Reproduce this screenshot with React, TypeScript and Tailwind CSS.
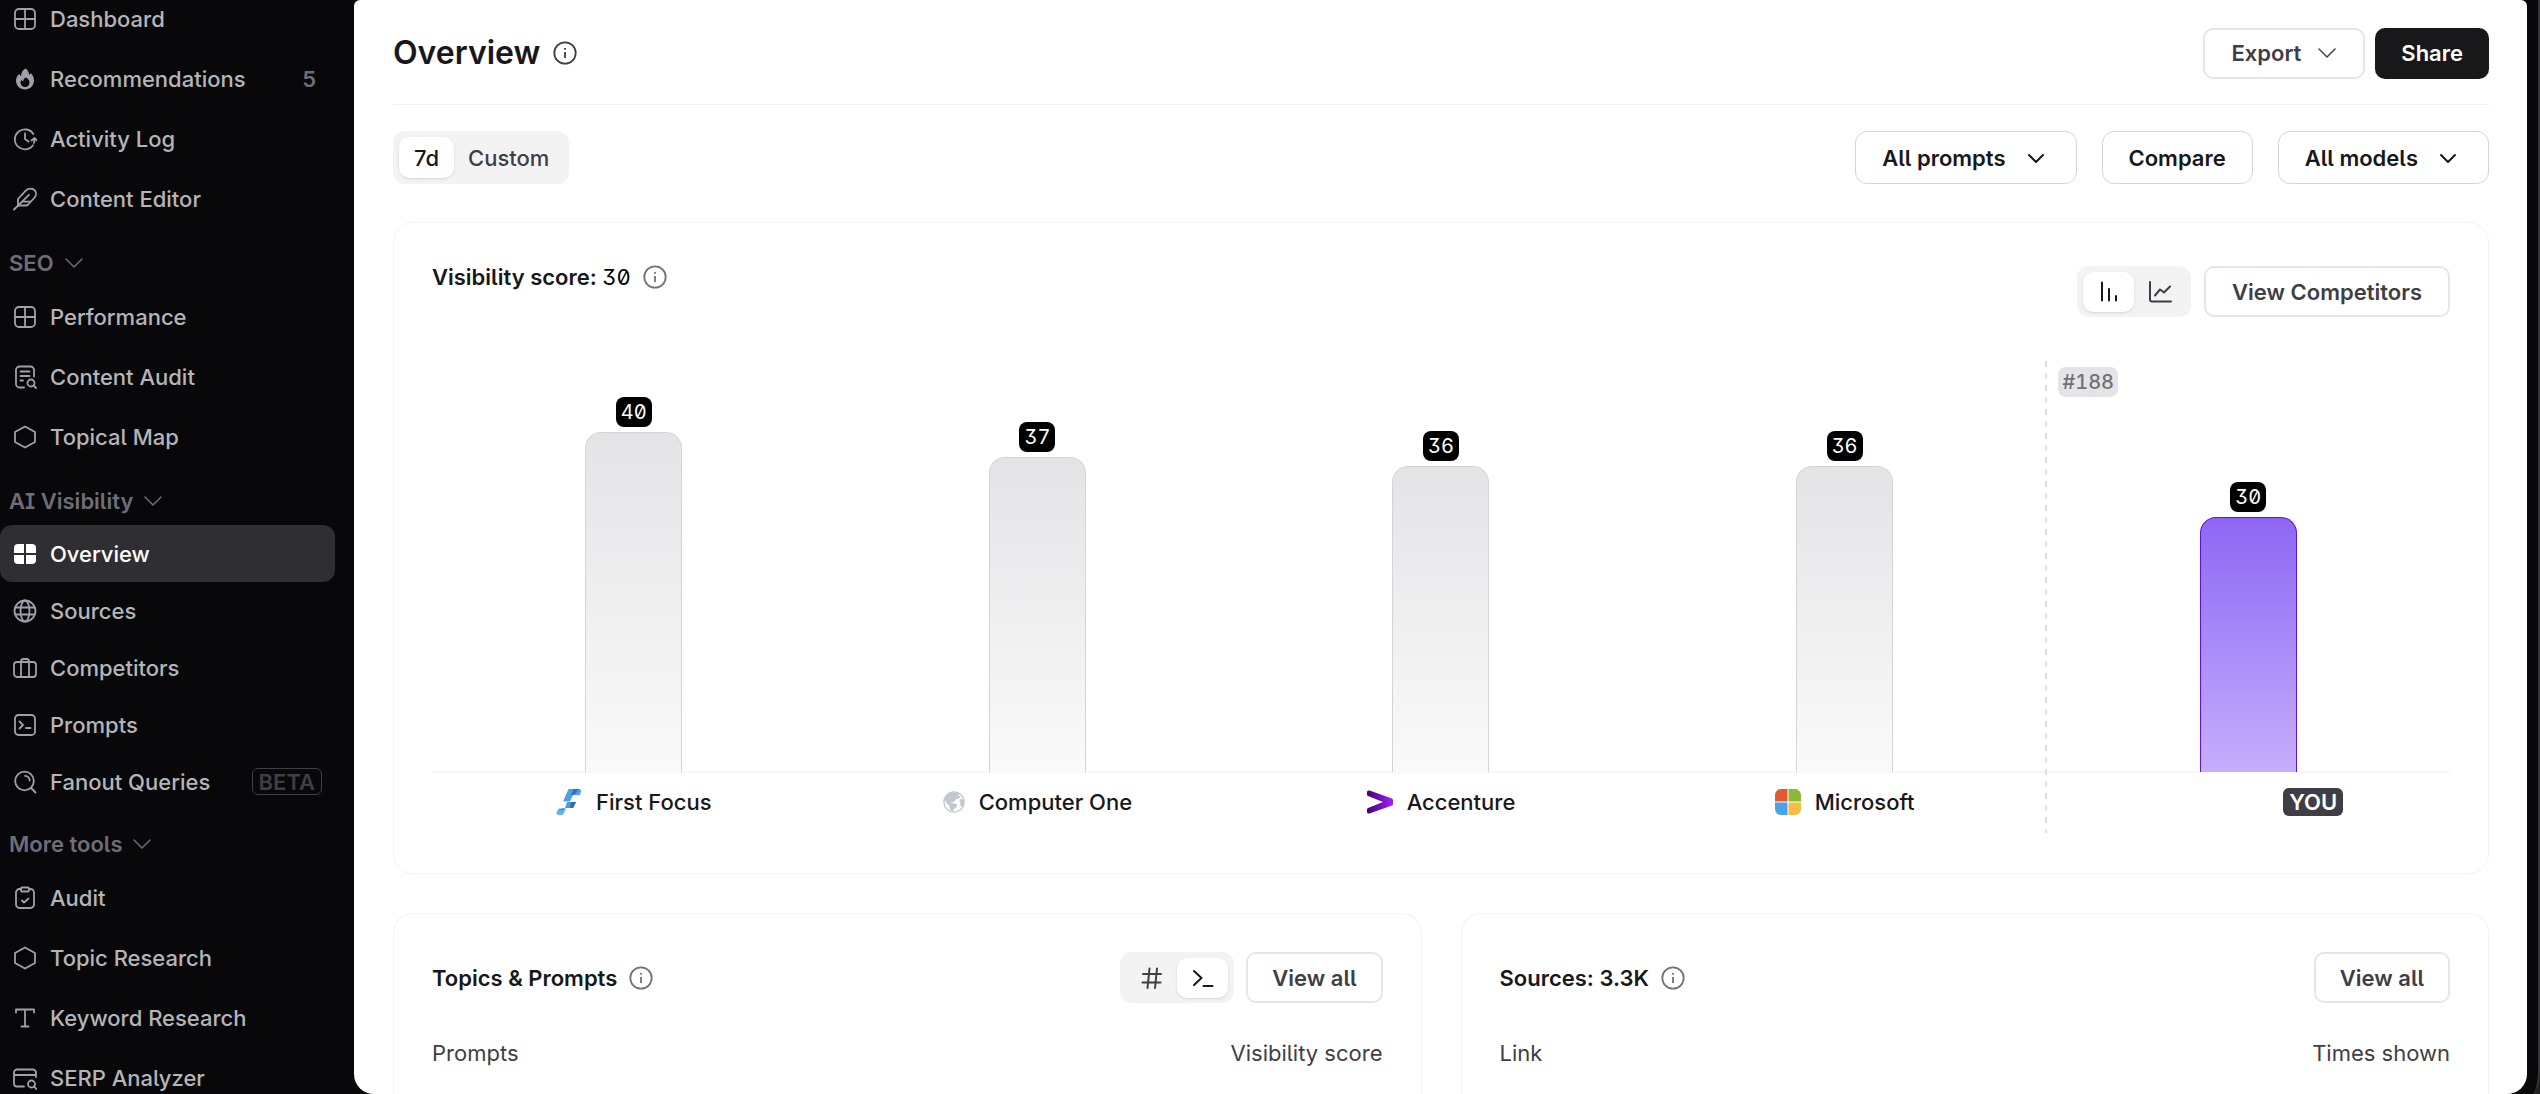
import React, { useState } from "react";

type IconName =
   | "grid"
   | "gridSolid"
   | "flame"
   | "activity"
   | "feather"
   | "docSearch"
   | "hexagon"
   | "globe"
   | "briefcase"
   | "prompt"
   | "search"
   | "clipboard"
   | "type"
   | "serp";

interface NavItem {
   label: string;
   icon: IconName;
   count?: number;
   badge?: string;
}

interface NavGroup {
   title?: string;
   dense?: boolean;
   items: NavItem[];
}

interface Score {
   name: string;
   value: number;
   logo?: React.ReactNode;
   rank?: number;
}

const navGroups: NavGroup[] = [
   {
      items: [
         { label: "Dashboard", icon: "grid" },
         { label: "Recommendations", icon: "flame", count: 5 },
         { label: "Activity Log", icon: "activity" },
         { label: "Content Editor", icon: "feather" },
      ],
   },
   {
      title: "SEO",
      items: [
         { label: "Performance", icon: "grid" },
         { label: "Content Audit", icon: "docSearch" },
         { label: "Topical Map", icon: "hexagon" },
      ],
   },
   {
      title: "AI Visibility",
      dense: true,
      items: [
         { label: "Overview", icon: "gridSolid" },
         { label: "Sources", icon: "globe" },
         { label: "Competitors", icon: "briefcase" },
         { label: "Prompts", icon: "prompt" },
         { label: "Fanout Queries", icon: "search", badge: "BETA" },
      ],
   },
   {
      title: "More tools",
      items: [
         { label: "Audit", icon: "clipboard" },
         { label: "Topic Research", icon: "hexagon" },
         { label: "Keyword Research", icon: "type" },
         { label: "SERP Analyzer", icon: "serp" },
      ],
   },
];

const iconPaths: Record<IconName, React.ReactNode> = {
   grid: (
      <>
         <rect x="2" y="2" width="20" height="20" rx="4" />
         <path d="M12 2v20M2 12h20" />
      </>
   ),
   gridSolid: (
      <g fill="currentColor" stroke="none">
         <path d="M5 2h6v9H1V6a4 4 0 0 1 4-4z" />
         <path d="M13 2h6a4 4 0 0 1 4 4v5H13z" />
         <path d="M1 13h10v9H5a4 4 0 0 1-4-4z" />
         <path d="M13 13h10v5a4 4 0 0 1-4 4h-6z" />
      </g>
   ),
   flame: (
      <path
         fill="currentColor"
         stroke="none"
         fillRule="evenodd"
         d="M12.6 1.5c-3.2 1.7-4.7 4.6-4.5 7.8-.9-.5-1.4-1.3-1.6-2.5C4.2 8.8 3 11 3 13.5c0 5.100 4 9 9 9s9-3.900 9-9c0-3-1.300-5.700-3.500-7.500-.2 1-.6 1.600-1.300 2-.2-2.800-1.400-5-3.600-6.500zM12.800 10.500c2.400 1.200 3.700 2.900 3.700 5a4.500 4.500 0 0 1-9 0c0-.9.300-1.700.8-2.400.5.700 1.100 1.100 1.900 1.300 0-1.700.9-3 2.600-3.900z"
      />
   ),
   activity: (
      <>
         <path d="M20.3 7A10 10 0 1 0 20 18.2" />
         <path d="M12 6.5V12l3.5 2.5M18.5 13.5l3-2.5 2.5 2.5M21.5 11.5c0 1.5-.2 3-.7 4.5" />
      </>
   ),
   feather: (
      <>
         <path d="M5 18.5V12l7.5-8.2C15.5 1 19.8 1 22 3.6c1.5 2 1.3 5.2-.8 7.4l-6 6.5c-.7.7-1.5 1-2.4 1z" />
         <path d="M1 22.5 16 7.8M9 14.6h8.5" />
      </>
   ),
   docSearch: (
      <>
         <path d="M21 11.5V5a3.5 3.5 0 0 0-3.5-3.5h-11A3.5 3.5 0 0 0 3 5v14a3.5 3.5 0 0 0 3.5 3.5H11" />
         <path d="M7.5 6.500h9M7.5 11h9M7.5 15.5h2.5" />
         <circle cx="18" cy="18" r="3.5" />
         <path d="m20.5 20.5 2.5 2.5" />
      </>
   ),
   hexagon: <path d="M12 1.5 22 7v10l-10 5.5L2 17V7z" />,
   globe: (
      <>
         <circle cx="12" cy="12" r="10.5" />
         <ellipse cx="12" cy="12" rx="4.5" ry="10.5" />
         <path d="M2.5 8.5h19M2.5 15.5h19" />
      </>
   ),
   briefcase: (
      <>
         <rect x="1" y="6" width="22" height="15" rx="3" />
         <path d="M8 21V5.5A2.5 2.5 0 0 1 10.5 3h3A2.5 2.5 0 0 1 16 5.5V21" />
      </>
   ),
   prompt: (
      <>
         <rect x="2" y="2" width="20" height="20" rx="3.5" />
         <path d="m6.5 8.5 3.5 3.5-3.5 3.5M13 15h4.5" />
      </>
   ),
   search: (
      <>
         <circle cx="11.5" cy="11" r="9.3" />
         <path d="m18 18 4.5 4.5M12 5.8a5 5 0 0 1 4.7 4.7" />
      </>
   ),
   clipboard: (
      <>
         <path d="M8 3H6.5A3.5 3.5 0 0 0 3 6.5v12A3.5 3.5 0 0 0 6.5 22h11a3.5 3.5 0 0 0 3.5-3.5v-12A3.5 3.5 0 0 0 17.5 3H16" />
         <rect x="8" y="1.5" width="8" height="4" rx="1" />
         <path d="m9 14.5 2 2 4.5-4" />
      </>
   ),
   type: <path d="M3 6.5v-3h18v3M12 3.5v17M8.5 20.5h7" />,
   serp: (
      <>
         <path d="M23 11V6.5a3 3 0 0 0-3-3H4a3 3 0 0 0-3 3v11a3 3 0 0 0 3 3h7M1 9h22" />
         <circle cx="18.5" cy="18" r="3.5" />
         <path d="m21 20.5 2.5 2.5" />
      </>
   ),
};

const Icon: React.FC<{ name: IconName }> = ({ name }) => (
   <svg
      viewBox="0 0 24 24"
      className="size-6 shrink-0"
      fill="none"
      stroke="currentColor"
      strokeWidth="1.8"
      strokeLinecap="round"
      strokeLinejoin="round"
      aria-hidden="true"
   >
      {iconPaths[name]}
   </svg>
);

const Chevron: React.FC<{ bold?: boolean }> = ({ bold }) => (
   <svg
      viewBox="0 0 20 20"
      className="size-5 shrink-0"
      fill="none"
      stroke="currentColor"
      strokeWidth={bold ? 2 : 1.5}
      strokeLinecap="round"
      strokeLinejoin="round"
      aria-hidden="true"
   >
      <path d={bold ? "m3 7 7 7 7-7" : "m2 6 8 8 8-8"} />
   </svg>
);

const InfoIcon: React.FC<{ className: string }> = ({ className }) => (
   <svg
      viewBox="0 0 24 24"
      className={`size-6 shrink-0 ${className}`}
      fill="none"
      stroke="currentColor"
      strokeWidth="1.8"
      aria-hidden="true"
   >
      <circle cx="12" cy="12" r="10.7" />
      <path d="M12 11v6M12 7v1.8" />
   </svg>
);

const FirstFocusLogo = () => (
   <svg viewBox="0 0 26 26" className="size-[26px]" aria-hidden="true">
      <path fill="#4aa3e0" d="M12.5 0H23a2 2 0 0 1 2 2.5L24 6h-7l-3 6.5H7z" />
      <path fill="#2f6fc9" d="M17.5 0H23l-5 6h-3z" />
      <path fill="#4a9be0" d="M11 13h9l-3 6h-8z" />
      <path fill="#2b67c4" d="M15 13h5l-3 6h-3z" />
      <path fill="#63b8e8" d="M2.5 19.5H10L7.5 25a2 2 0 0 1-2 1H2a2 2 0 0 1-1.5-2.5z" />
      <path fill="#2f74cc" d="M6 19.5h4L3 22z" />
   </svg>
);

const GlobeLogo = () => (
   <svg viewBox="0 0 24 24" className="size-[22px]" aria-hidden="true">
      <circle cx="12" cy="12" r="11" fill="#fff" stroke="#c3c7d3" strokeWidth="1.5" />
      <path
         fill="#c3c7d3"
         d="M8 2.2C11 .8 15 .8 18 3l-2 2 3 .5-2 3-3 .5-2 3H8.5l3 1.5 4 1-1 3.5-3 2-.5 2.8C8 21 7 19 7 16.5L4 13 1.5 9C2.5 6 5 3.5 8 2.2z"
      />
      <path fill="#c3c7d3" d="M22.5 9.5c.6 3 0 6-1.5 8l-2.5-2 .5-3.5-1.5-2 2-1.5z" />
   </svg>
);

const AccentureLogo = () => (
   <svg viewBox="0 0 26 24" className="h-6 w-[26px]" aria-hidden="true">
      <defs>
         <linearGradient id="accent" x1="0" x2="1">
            <stop offset="0" stopColor="#460073" />
            <stop offset="1" stopColor="#a020ff" />
         </linearGradient>
      </defs>
      <path
         fill="url(#accent)"
         d="M0 2Q0 0 2.5.5L25 8.500q1 .5 1 1.500v4q0 1-1 1.500L2.500 23.500Q0 24 0 22v-2.500q0-1 1-1.500l15-6L1 6Q0 5.500 0 4.500z"
      />
   </svg>
);

const MicrosoftLogo = () => (
   <svg viewBox="0 0 26 26" className="size-[26px]" aria-hidden="true">
      <path fill="#e05a33" d="M6 0h6.5v12.5H0V6a6 6 0 0 1 6-6z" />
      <path fill="#8cba36" d="M13.5 0H20a6 6 0 0 1 6 6v6.5H13.5z" />
      <path fill="#4aa0ea" d="M0 13.5h12.5V26H6a6 6 0 0 1-6-6z" />
      <path fill="#f6bd43" d="M13.5 13.5H26V20a6 6 0 0 1-6 6h-6.5z" />
   </svg>
);

const scores: Score[] = [
   { name: "First Focus", value: 40, logo: <FirstFocusLogo /> },
   { name: "Computer One", value: 37, logo: <GlobeLogo /> },
   { name: "Accenture", value: 36, logo: <AccentureLogo /> },
   { name: "Microsoft", value: 36, logo: <MicrosoftLogo /> },
   { name: "YOU", value: 30, rank: 188 },
];

const PIXELS_PER_POINT = 8.5;

const Sidebar: React.FC = () => (
   <nav className="w-[354px] shrink-0 overflow-hidden text-[22px] font-medium text-[#b5b5b8]">
      <div className="-mt-[11px]">
         {navGroups.map((group, i) => (
            <section key={i}>
               {group.title && (
                  <button className="mt-[10px] flex h-12 items-center gap-[10px] pl-[9px] font-semibold text-[#6f6e78]">
                     {group.title}
                     <Chevron />
                  </button>
               )}
               <ul>
                  {group.items.map((item) => {
                     const active = item.label === "Overview";
                     return (
                        <li key={item.label}>
                           <a
                              href="#"
                              aria-current={active ? "page" : undefined}
                              className={`mr-[19px] flex items-center gap-[13px] rounded-xl px-[13px] ${
                                 group.dense ? "h-[57px]" : "h-[60px]"
                              } ${active ? "bg-[#2f2e33] text-white" : ""}`}
                           >
                              <span className={active ? "text-white" : "text-[#a1a0aa]"}>
                                 <Icon name={item.icon} />
                              </span>
                              {item.label}
                              {item.count && (
                                 <span className="mr-[6px] ml-auto font-semibold text-[#6f6e78]">
                                    {item.count}
                                 </span>
                              )}
                              {item.badge && (
                                 <span className="ml-auto flex h-[27px] items-center rounded-md border border-[#3f3e46] px-[6px] font-semibold text-[#3f3e46]">
                                    {item.badge}
                                 </span>
                              )}
                           </a>
                        </li>
                     );
                  })}
               </ul>
            </section>
         ))}
      </div>
   </nav>
);

const SegmentButton: React.FC<{
   active: boolean;
   label: string;
   onClick: () => void;
   children: React.ReactNode;
}> = ({ active, label, onClick, children }) => (
   <button
      aria-label={label}
      aria-pressed={active}
      onClick={onClick}
      className={`flex h-10 w-[51px] items-center justify-center rounded-[10px] ${
         active ? "bg-white text-[#18181a] shadow" : "text-[#3f3e46]"
      }`}
   >
      <svg
         viewBox="0 0 24 24"
         className="size-6"
         fill="none"
         stroke="currentColor"
         strokeWidth="2"
         strokeLinecap="round"
         strokeLinejoin="round"
         aria-hidden="true"
      >
         {children}
      </svg>
   </button>
);

const OutlineButton: React.FC<{ wide?: boolean; children: React.ReactNode }> = ({
   wide,
   children,
}) => (
   <button
      className={`flex h-[51px] items-center gap-4 rounded-[10px] border-2 border-[#e6e6e8] font-semibold text-[#3f3e46] ${
         wide ? "px-[26px]" : "px-6"
      }`}
   >
      {children}
   </button>
);

const FilterButton: React.FC<{ menu?: boolean; children: React.ReactNode }> = ({
   menu,
   children,
}) => (
   <button
      className={`flex h-[53px] items-center gap-5 rounded-xl border border-[#d4d4d8] pl-[26px] font-semibold text-[#18181a] ${
         menu ? "pr-[30px]" : "pr-[26px]"
      }`}
   >
      {children}
      {menu && <Chevron bold />}
   </button>
);

const VisibilityCard: React.FC = () => {
   const [view, setView] = useState<"bars" | "line">("bars");

   return (
      <section className="mt-[38px] rounded-[20px] border border-[#f3f3f4] px-[38px] pb-10">
         <div className="flex items-start justify-between pt-[43px]">
            <div className="flex h-[22px] items-center gap-3">
               <h2 className="font-semibold text-[#18181a]">
                  Visibility score:{" "}
                  <span className="font-normal text-black [font-feature-settings:'tnum','zero','cv09']">
                     30
                  </span>
               </h2>
               <InfoIcon className="text-[#71717a]" />
            </div>
            <div className="flex items-center gap-[13px]">
               <div className="flex h-[51px] items-center rounded-xl bg-[#f3f3f4] px-[6px]">
                  <SegmentButton
                     label="Bar chart"
                     active={view === "bars"}
                     onClick={() => setView("bars")}
                  >
                     <path d="M5 2.5v18M12 9v11.500M19 16v4.500" />
                  </SegmentButton>
                  <SegmentButton
                     label="Line chart"
                     active={view === "line"}
                     onClick={() => setView("line")}
                  >
                     <path d="M2 2v17.5a2 2 0 0 0 2 2h19M7 15.5l5-6 4 3 6-6" />
                  </SegmentButton>
               </div>
               <OutlineButton wide>View Competitors</OutlineButton>
            </div>
         </div>

         {/* Chart */}
         <div className="mt-11 grid grid-cols-5">
            {scores.map((score) => (
               <div key={score.name} className="relative h-[472px]">
                  {score.rank && (
                     <>
                        <div className="absolute inset-y-0 -left-px w-[2px] bg-[repeating-linear-gradient(to_bottom,#dfdfe1_0_6px,transparent_6px_12px)]" />
                        <span className="absolute top-[6px] left-3 flex h-[30px] items-center rounded-lg bg-[#e4e4e7] px-1 text-[20px] font-medium text-[#71717a] [font-feature-settings:'tnum']">
                           #{score.rank}
                        </span>
                     </>
                  )}
                  <div className="flex h-[412px] flex-col items-center justify-end border-b-2 border-[#f7f7f8]">
                     <span className="mb-[5px] flex h-[30px] w-9 items-center justify-center rounded-lg bg-black text-[20px] text-white [font-feature-settings:'tnum','zero','cv09']">
                        {score.value}
                     </span>
                     <div
                        className={`-mb-px w-[97px] shrink-0 rounded-t-2xl border border-b-0 ${
                           score.rank
                              ? "border-[#5b14db] bg-linear-to-b from-[#8e66f5] to-[#c6aefa]"
                              : "border-[#d4d4d8] bg-linear-to-b from-[#e4e4e7] to-[#fafafa]"
                        }`}
                        style={{ height: Math.round(score.value * PIXELS_PER_POINT) }}
                     />
                  </div>
                  <div className="flex h-[58px] items-center justify-center text-[#18181a]">
                     {score.rank ? (
                        <span className="flex w-[190px] justify-end">
                           <span className="flex h-7 items-center rounded-md bg-[#3f3e46] px-[6px] font-semibold text-white">
                              {score.name}
                           </span>
                        </span>
                     ) : (
                        <span className="flex items-center gap-[14px] font-medium">
                           {score.logo}
                           {score.name}
                        </span>
                     )}
                  </div>
               </div>
            ))}
         </div>
      </section>
   );
};

const TableCard: React.FC<{
   title: string;
   columns: [string, string];
   toggle?: React.ReactNode;
}> = ({ title, columns, toggle }) => (
   <section className="rounded-t-[20px] border border-b-0 border-[#f3f3f4] p-[38px]">
      <div className="flex items-center justify-between">
         <div className="flex items-center gap-3">
            <h2 className="font-semibold text-[#18181a]">{title}</h2>
            <InfoIcon className="text-[#71717a]" />
         </div>
         <div className="flex items-center gap-3">
            {toggle}
            <OutlineButton>View all</OutlineButton>
         </div>
      </div>
      <table className="mt-9 w-full text-[#3f3e46]">
         <thead>
            <tr>
               <th className="text-left font-normal">{columns[0]}</th>
               <th className="text-right font-normal">{columns[1]}</th>
            </tr>
         </thead>
      </table>
   </section>
);

const App: React.FC = () => {
   const [range, setRange] = useState<"7d" | "custom">("7d");
   const [mode, setMode] = useState<"topics" | "prompts">("prompts");

   return (
      <div className="h-screen bg-[#1d211f]">
         <div className="flex h-full overflow-hidden rounded-br-[8px_24px] border-r-2 border-[#343436] bg-[#08080a] font-[Inter,sans-serif] text-[22px] leading-7 [font-feature-settings:'ss02']">
            <Sidebar />
            <main className="mr-[11px] flex min-w-0 flex-1 flex-col overflow-hidden rounded-t-md rounded-b-[20px] bg-white pr-[38px] pl-[39px]">
               <header className="flex h-[105px] shrink-0 items-center justify-between border-b border-[#f0f0f1] pt-[2px]">
                  <div className="flex items-center gap-[13px]">
                     <h1 className="text-[32px] font-semibold text-[#18181a]">Overview</h1>
                     <InfoIcon className="text-[#3f3e46]" />
                  </div>
                  <div className="flex items-center gap-[10px]">
                     <OutlineButton wide>
                        Export
                        <Chevron />
                     </OutlineButton>
                     <button className="h-[51px] rounded-[10px] bg-[#18181a] px-[26px] font-semibold text-white">
                        Share
                     </button>
                  </div>
               </header>

               {/* Filters */}
               <div className="mt-[26px] flex items-center justify-between">
                  <div className="flex h-[53px] items-center rounded-xl bg-[#f3f3f4] px-[6px] font-medium">
                     <button
                        aria-pressed={range === "7d"}
                        onClick={() => setRange("7d")}
                        className={`h-[41px] rounded-[10px] px-[15px] ${
                           range === "7d" ? "bg-white text-[#18181a] shadow" : "text-[#3f3e46]"
                        }`}
                     >
                        7d
                     </button>
                     <button
                        aria-pressed={range === "custom"}
                        onClick={() => setRange("custom")}
                        className={`h-[41px] rounded-[10px] px-[14px] ${
                           range === "custom" ? "bg-white text-[#18181a] shadow" : "text-[#3f3e46]"
                        }`}
                     >
                        Custom
                     </button>
                  </div>
                  <div className="flex items-center gap-[25px]">
                     <FilterButton menu>All prompts</FilterButton>
                     <FilterButton>Compare</FilterButton>
                     <FilterButton menu>All models</FilterButton>
                  </div>
               </div>

               <VisibilityCard />

               <div className="mt-[39px] grid flex-1 grid-cols-2 gap-[39px]">
                  <TableCard
                     title="Topics & Prompts"
                     columns={["Prompts", "Visibility score"]}
                     toggle={
                        <div className="flex h-[51px] items-center rounded-xl bg-[#f3f3f4] px-[6px]">
                           <SegmentButton
                              label="Topics"
                              active={mode === "topics"}
                              onClick={() => setMode("topics")}
                           >
                              <path d="M3 8h18M2.5 16.5h18M9.5 2.5l-2 19.5M17 2.5 15 22" />
                           </SegmentButton>
                           <SegmentButton
                              label="Prompts"
                              active={mode === "prompts"}
                              onClick={() => setMode("prompts")}
                           >
                              <path d="m3 5 7.5 7L3 19M12.5 20h9" />
                           </SegmentButton>
                        </div>
                     }
                  />
                  <TableCard title="Sources: 3.3K" columns={["Link", "Times shown"]} />
               </div>
            </main>
         </div>
      </div>
   );
};

export default App;
